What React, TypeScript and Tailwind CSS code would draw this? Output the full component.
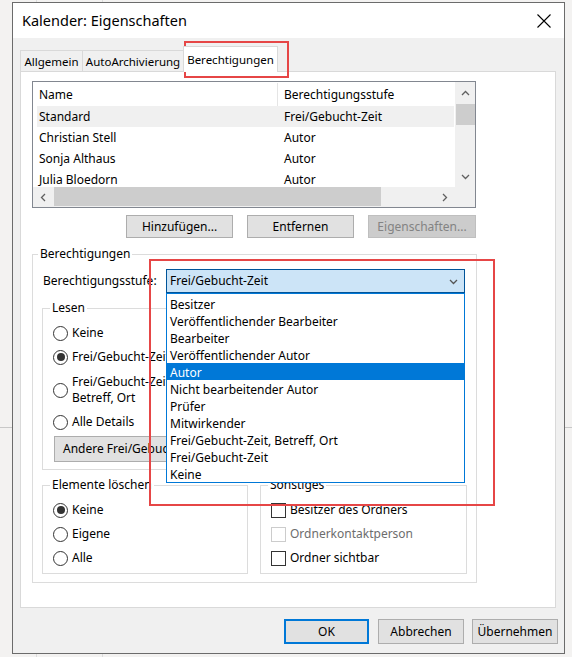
import React from 'react';

type Dir = 'up' | 'down' | 'left' | 'right';

const CHEV: Record<Dir, string> = {
  up: 'M1 6 L4.5 2.5 L8 6',
  down: 'M1 3 L4.5 6.5 L8 3',
  left: 'M6 1 L2.5 4.5 L6 8',
  right: 'M3 1 L6.5 4.5 L3 8',
};

const Chevron = ({ dir, color = '#606060' }: { dir: Dir; color?: string }) => (
  <svg width="9" height="9" viewBox="0 0 9 9">
    <path d={CHEV[dir]} fill="none" stroke={color} strokeWidth="1.3" />
  </svg>
);

const Radio = ({ checked = false }: { checked?: boolean }) => (
  <span className="w-[15px] h-[15px] rounded-full border border-[#333333] bg-white flex items-center justify-center shrink-0">
    {checked && <span className="w-[8px] h-[8px] rounded-full bg-[#333333]" />}
  </span>
);

const Check = ({ disabled = false }: { disabled?: boolean }) => (
  <span
    className={`w-[15px] h-[15px] border bg-white shrink-0 ${disabled ? 'border-[#cccccc]' : 'border-[#333333]'}`}
  />
);

const PERMISSIONS = [
  'Besitzer',
  'Veröffentlichender Bearbeiter',
  'Bearbeiter',
  'Veröffentlichender Autor',
  'Autor',
  'Nicht bearbeitender Autor',
  'Prüfer',
  'Mitwirkender',
  'Frei/Gebucht-Zeit, Betreff, Ort',
  'Frei/Gebucht-Zeit',
  'Keine',
];

const USERS = [
  { name: 'Standard', level: 'Frei/Gebucht-Zeit' },
  { name: 'Christian Stell', level: 'Autor' },
  { name: 'Sonja Althaus', level: 'Autor' },
  { name: 'Julia Bloedorn', level: 'Autor' },
];

export default function App() {
  return (
    <div className="relative w-[572px] h-[657px] overflow-hidden bg-[#f3f2f1] text-[12px] leading-[16px] text-black font-['Noto_Sans',sans-serif] pt-[2px] pl-[12px]">
      {/* app behind the dialog */}
      <div className="absolute left-0 right-0 top-[427px] h-px bg-[#c8c8c8]" />
      <div className="absolute left-[36px] top-0 bottom-0 w-px bg-[#dcdcdc]" />
      <div className="absolute left-[102px] top-0 bottom-0 w-px bg-[#dcdcdc]" />

      {/* dialog */}
      <div className="relative w-[553px] h-[652px] border border-[#6b6b6b] flex flex-col bg-[#f0f0f0]">
        <div className="h-[35px] bg-white flex items-center justify-between pl-[9px] pr-[13px] shrink-0">
          <span className="text-[14.5px] -mt-[2px]">Kalender: Eigenschaften</span>
          <svg width="14" height="14" viewBox="0 0 14 14">
            <path d="M0.5 0.5 L13.5 13.5 M13.5 0.5 L0.5 13.5" stroke="#000" strokeWidth="1.1" />
          </svg>
        </div>

        <div className="flex-1 flex flex-col pl-[7px]">
          {/* tabs */}
          <div className="flex items-end h-[33px] text-[11.5px]">
            <div className="w-[63px] h-[21px] border border-b-0 border-[#d9d9d9] flex items-center justify-center pt-[1px]">
              Allgemein
            </div>
            <div className="w-[102px] h-[21px] -ml-px border border-b-0 border-[#d9d9d9] flex items-center justify-center pt-[1px]">
              AutoArchivierung
            </div>
            <div className="relative z-10 w-[95px] h-[26px] -ml-px -mb-px bg-white border border-b-0 border-[#d9d9d9] flex items-center justify-center pt-[1px]">
              Berechtigungen
            </div>
          </div>

          {/* panel */}
          <div className="w-[536px] h-[537px] border border-[#d9d9d9] bg-white pl-[11px] pt-[9px]">
            {/* list */}
            <div className="w-[444px] h-[127px] border border-[#828790] flex flex-col">
              <div className="flex h-[105px]">
                <div className="w-[422px] overflow-hidden">
                  <div className="flex h-[24px] items-center pt-[1px]">
                    <div className="w-[245px] h-full pl-[6px] flex items-center border-r border-[#e5e5e5]">Name</div>
                    <div className="pl-[6px]">Berechtigungsstufe</div>
                  </div>
                  <div className="pl-[4px] pr-[1px]">
                    {USERS.map((u, i) => (
                      <div key={u.name} className={`flex h-[21px] items-center pt-[1px] ${i === 0 ? 'bg-[#f0f0f0]' : ''}`}>
                        <div className="w-[241px] pl-[2px]">{u.name}</div>
                        <div className="pl-[6px]">{u.level}</div>
                      </div>
                    ))}
                  </div>
                </div>
                <div className="w-[20px] bg-[#f0f0f0] flex flex-col items-center">
                  <div className="h-[22px] flex items-center justify-center">
                    <Chevron dir="up" />
                  </div>
                  <div className="w-[19px] h-[21px] bg-[#cdcdcd]" />
                  <div className="flex-1" />
                  <div className="h-[22px] flex items-center justify-center">
                    <Chevron dir="down" />
                  </div>
                </div>
              </div>
              <div className="flex h-[20px] bg-[#f0f0f0]">
                <div className="w-[21px] flex items-center justify-center">
                  <Chevron dir="left" />
                </div>
                <div className="w-[327px] h-[19px] bg-[#cdcdcd]" />
                <div className="w-[74px] flex items-center justify-end pr-[6px]">
                  <Chevron dir="right" />
                </div>
                <div className="flex-1" />
              </div>
            </div>

            {/* list buttons */}
            <div className="w-[444px] flex justify-end gap-[14px] mt-[7px]">
              <button className="w-[107px] h-[23px] border border-[#adadad] bg-[#e1e1e1]">Hinzufügen...</button>
              <button className="w-[107px] h-[23px] border border-[#adadad] bg-[#e1e1e1]">Entfernen</button>
              <button className="w-[108px] h-[23px] border border-[#bfbfbf] bg-[#cccccc] text-[#838383]">
                Eigenschaften...
              </button>
            </div>

            {/* permissions group */}
            <fieldset className="w-[445px] h-[337px] mt-[8px] border border-[#dcdcdc]">
              <legend className="ml-[5px] px-[2px]">Berechtigungen</legend>
              <div className="flex items-center h-[24px] mt-[7px] pl-[10px]">
                <div className="w-[123px]">Berechtigungsstufe:</div>
                <div className="w-[299px] h-[24px] border border-[#005499] bg-[#cce4f7] flex items-center justify-between pl-[3px] pr-[6px]">
                  <span>Frei/Gebucht-Zeit</span>
                  <Chevron dir="down" color="#555555" />
                </div>
              </div>

              <div className="flex mt-[7px] ml-[9px] gap-[11px]">
                <fieldset className="w-[206px] h-[170px] border border-[#dcdcdc] pl-[10px]">
                  <legend className="ml-[-3px] px-[2px]">Lesen</legend>
                  <div className="flex items-center gap-[4px] h-[16px] mt-[9px]">
                    <Radio />
                    <span>Keine</span>
                  </div>
                  <div className="flex items-center gap-[4px] h-[16px] mt-[8px]">
                    <Radio checked />
                    <span>Frei/Gebucht-Zeit</span>
                  </div>
                  <div className="flex items-center gap-[4px] h-[32px] mt-[9px]">
                    <Radio />
                    <span>
                      Frei/Gebucht-Zeit,
                      <br />
                      Betreff, Ort
                    </span>
                  </div>
                  <div className="flex items-center gap-[4px] h-[16px] mt-[8px]">
                    <Radio />
                    <span>Alle Details</span>
                  </div>
                  <button className="mt-[6px] w-[186px] h-[26px] border border-[#adadad] bg-[#e1e1e1] text-left pl-[8px] ml-[1px]">
                    Andere Frei/Gebucht-Zeit...
                  </button>
                </fieldset>
                <fieldset className="w-[206px] h-[170px] border border-[#dcdcdc] pl-[10px]">
                  <legend className="ml-[-3px] px-[2px]">Schreiben</legend>
                  {['Elemente erstellen', 'Unterordner erstellen', 'Eigene bearbeiten', 'Alle bearbeiten'].map((t) => (
                    <div key={t} className="flex items-center gap-[4px] h-[16px] mt-[9px]">
                      <Check />
                      <span>{t}</span>
                    </div>
                  ))}
                </fieldset>
              </div>

              <div className="flex mt-[7px] ml-[9px] gap-[12px]">
                <fieldset className="w-[206px] h-[97px] border border-[#dcdcdc] pl-[10px]">
                  <legend className="ml-[-3px] px-[2px]">Elemente löschen</legend>
                  <div className="flex items-center gap-[4px] h-[16px] mt-[9px]">
                    <Radio checked />
                    <span>Keine</span>
                  </div>
                  <div className="flex items-center gap-[4px] h-[16px] mt-[8px]">
                    <Radio />
                    <span>Eigene</span>
                  </div>
                  <div className="flex items-center gap-[4px] h-[16px] mt-[8px]">
                    <Radio />
                    <span>Alle</span>
                  </div>
                </fieldset>
                <fieldset className="w-[207px] h-[97px] border border-[#dcdcdc] pl-[10px]">
                  <legend className="ml-[-3px] px-[2px]">Sonstiges</legend>
                  <div className="flex items-center gap-[4px] h-[16px] mt-[9px]">
                    <Check />
                    <span>Besitzer des Ordners</span>
                  </div>
                  <div className="flex items-center gap-[4px] h-[16px] mt-[8px]">
                    <Check disabled />
                    <span className="text-[#6d6d6d]">Ordnerkontaktperson</span>
                  </div>
                  <div className="flex items-center gap-[4px] h-[16px] mt-[8px]">
                    <Check />
                    <span>Ordner sichtbar</span>
                  </div>
                </fieldset>
              </div>
            </fieldset>
          </div>

          {/* dialog buttons */}
          <div className="flex justify-end mt-[11px] pr-[6px]">
            <button className="w-[85px] h-[25px] border-2 border-[#0078d7] bg-[#e1e1e1]">OK</button>
            <button className="w-[86px] h-[25px] ml-[9px] border border-[#adadad] bg-[#e1e1e1]">Abbrechen</button>
            <button className="w-[86px] h-[25px] ml-[8px] border border-[#adadad] bg-[#e1e1e1]">Übernehmen</button>
          </div>
        </div>
      </div>

      {/* open dropdown */}
      <div className="absolute left-[166px] top-[293px] w-[299px] border border-[#0078d7] bg-white pt-px">
        {PERMISSIONS.map((p) => (
          <div
            key={p}
            className={`h-[17px] leading-[18px] pt-[1px] pl-[3px] overflow-hidden ${p === 'Autor' ? 'bg-[#0078d7] text-white' : ''}`}
          >
            {p}
          </div>
        ))}
      </div>

      {/* red highlights */}
      <div className="absolute left-[184px] top-[41px] w-[105px] h-[37px] border-2 border-[#e64646]" />
      <div className="absolute left-[149px] top-[259px] w-[346px] h-[247px] border-2 border-[#e64646]" />
    </div>
  );
}
